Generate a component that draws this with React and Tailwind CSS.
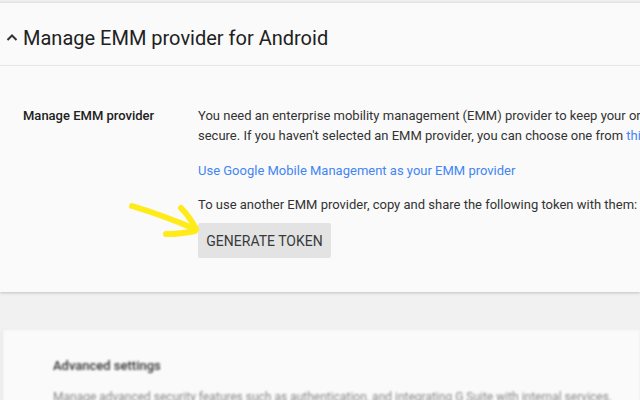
import React from "react";

export default function App() {
  const font = { fontFamily: "Roboto, 'Noto Sans', sans-serif" };
  return (
    <div className="w-[640px] h-[400px] overflow-hidden bg-[#f1f1f1] relative" style={font}>
      <div className="h-[2px]" />
      <div className="bg-[#fafafa] border-t border-[#e4e4e4] shadow-[0_1px_3px_rgba(0,0,0,0.2)] h-[290px] relative">
        <div className="flex items-center h-[63px] pl-[6px] pt-[8px] border-b border-[#e6e6e6]">
          <svg width="12" height="12" viewBox="0 0 12 12" className="mr-[5px] mt-[-1px]">
            <path d="M1.5 8 L6 3.5 L10.5 8" stroke="#333" strokeWidth="2" fill="none" />
          </svg>
          <span className="text-[20px] text-[#212121] whitespace-nowrap">Manage EMM provider for Android</span>
        </div>
        <div className="flex pt-[40px]">
          <div className="w-[198px] pl-[23px] shrink-0 text-[13px] font-medium text-[#212121] leading-[20px]">
            Manage EMM provider
          </div>
          <div className="text-[13px] leading-[20px] text-[#333] whitespace-nowrap">
            <div>You need an enterprise mobility management (EMM) provider to keep your organization's data</div>
            <div>
              secure. If you haven't selected an EMM provider, you can choose one from{" "}
              <span className="text-[#4285f4]">this list</span>
            </div>
            <div className="mt-[15px] text-[#4285f4]">Use Google Mobile Management as your EMM provider</div>
            <div className="mt-[14px]">To use another EMM provider, copy and share the following token with them:</div>
            <div className="mt-[8px] w-[133px] h-[35px] bg-[#e3e3e3] rounded-[2px] flex items-center justify-center text-[14px] font-normal text-[#3a3a3a]">
              GENERATE TOKEN
            </div>
          </div>
        </div>
        <svg className="absolute left-0 top-0" width="640" height="290" viewBox="0 0 640 290">
          <g stroke="#ffeb1a" strokeWidth="6" strokeLinecap="round" strokeLinejoin="round" fill="none">
            <path d="M132 203 Q165 213 195 226" />
            <path d="M181 205 Q190 214 196 226" />
            <path d="M166 231 Q182 231 195 228" />
          </g>
        </svg>
      </div>
      <div className="h-[38px]" />
      <div className="ml-[3px] bg-[#fafafa] shadow-[0_1px_3px_rgba(0,0,0,0.15)] h-[80px] pl-[50px] pt-[26px] blur-[1px]">
        <div className="text-[13px] font-medium text-[#333] leading-[20px]">Advanced settings</div>
        <div className="mt-[12px] text-[12px] text-[#888] whitespace-nowrap">
          Manage advanced security features such as authentication, and integrating G Suite with internal services.
        </div>
      </div>
    </div>
  );
}
